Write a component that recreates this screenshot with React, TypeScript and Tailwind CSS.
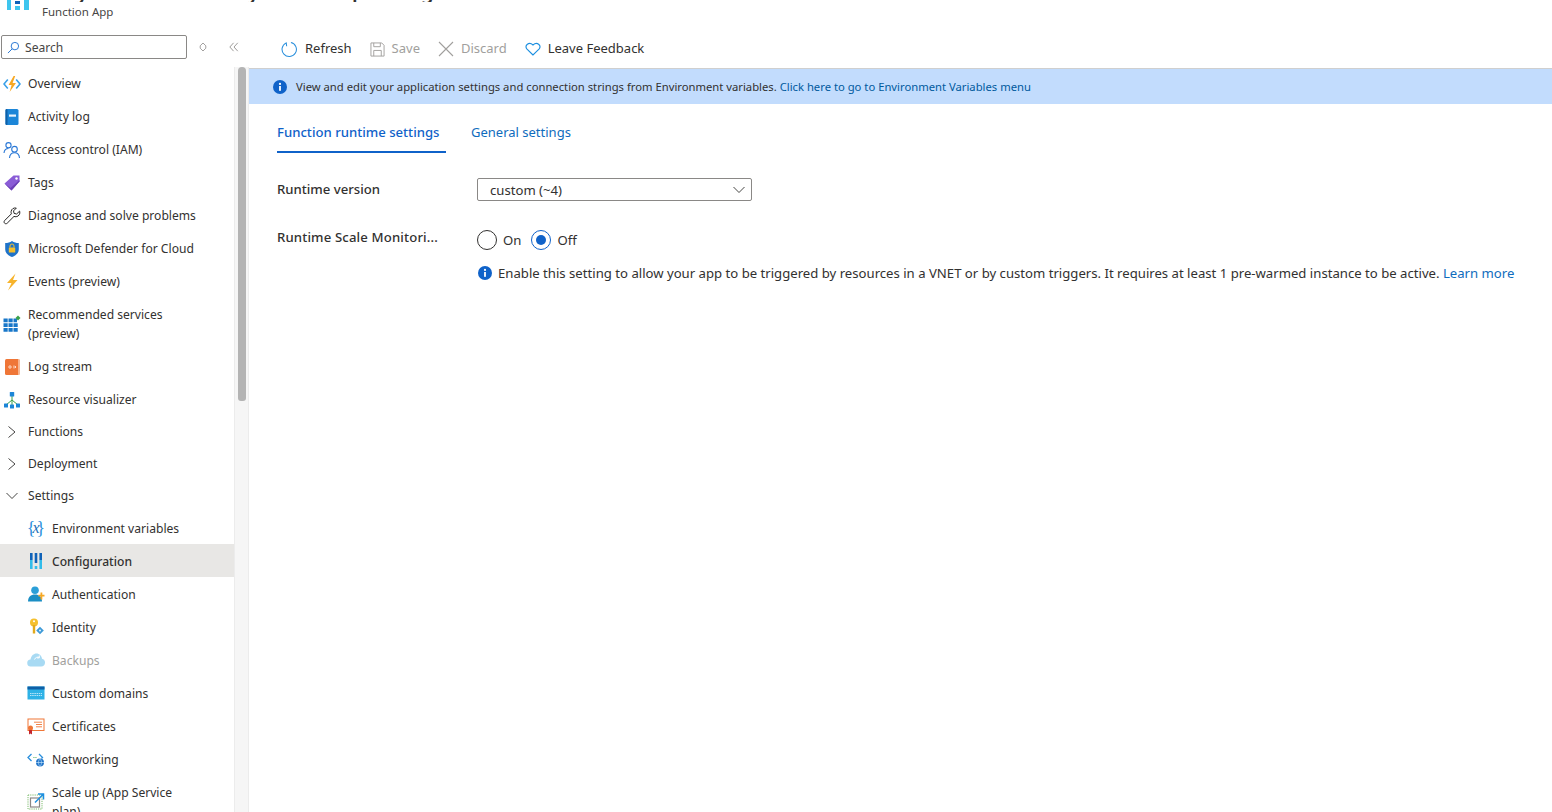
import type { ReactNode } from "react";

function Svg({ children, className }: { children: ReactNode; className?: string }) {
  return (
    <svg viewBox="0 0 18 18" fill="none" className={className ?? "h-[18px] w-[18px] shrink-0"}>
      {children}
    </svg>
  );
}

const FunctionIcon = () => (
  <Svg>
    <path d="M4.800 4.500 1 9l3.800 4.500" stroke="#3aa0e8" strokeWidth="1.600" />
    <path d="M13.200 4.500 17 9l-3.800 4.500" stroke="#3aa0e8" strokeWidth="1.600" />
    <path d="M10.600 1 5.600 10h3L6.600 17l6.400-9H9.600l2.600-7z" fill="#f7a823" />
  </Svg>
);
const BookIcon = () => (
  <Svg>
    <rect x="2.500" y="1" width="13" height="16" rx="1.500" fill="#1c86d8" />
    <rect x="2.500" y="1" width="2" height="16" rx="1" fill="#0f5fa6" />
    <rect x="6" y="6.500" width="7" height="2.200" fill="#e8f3fc" />
  </Svg>
);
const PeopleIcon = () => (
  <Svg>
    <circle cx="5.500" cy="4.200" r="2.600" stroke="#2a78d6" strokeWidth="1.100" />
    <path d="M1 12c.3-3 2-4.500 4.500-4.500" stroke="#2a78d6" strokeWidth="1.100" />
    <circle cx="11.500" cy="8.200" r="2.800" stroke="#2a78d6" strokeWidth="1.100" />
    <path d="M6.500 17c.2-3.400 2-5.200 5-5.200s4.800 1.800 5 5.200" stroke="#2a78d6" strokeWidth="1.100" />
  </Svg>
);
const TagIcon = () => (
  <Svg>
    <path d="M1.500 9.500 10.500 1.500H16.500V7.500L8.500 16.500z" fill="#8a5cd6" />
    <path d="M1.500 9.500 8.500 16.500 16.500 7.500V6L7.500 14z" fill="#6b3fb5" />
    <circle cx="13.500" cy="4.500" r="1.200" fill="#fff" />
  </Svg>
);
const WrenchIcon = () => (
  <Svg>
    <path
      d="M16.500 4.200 13.600 7l-2.500-.6-.6-2.500 2.800-2.800c-2.400-.7-5 .9-5.200 3.500-.1.800 0 1.500.3 2.200l-6.800 6.800c-.7.800-.7 1.900 0 2.600s1.900.7 2.600 0l6.800-6.800c.7.3 1.400.4 2.200.3 2.600-.3 4.200-2.800 3.500-5.500z"
      stroke="#252423"
      strokeWidth="1"
    />
  </Svg>
);
const ShieldIcon = () => (
  <Svg>
    <path d="M9 1c2 1.500 4.200 2 6.800 2v6.500c0 3.500-3 6-6.800 7.500-3.800-1.500-6.800-4-6.800-7.500V3C4.800 3 7 2.500 9 1z" fill="#1f73c9" />
    <rect x="5.800" y="7.500" width="6.400" height="5" rx=".6" fill="#f5c02e" />
    <path d="M7 7.500V6a2 2 0 0 1 4 0v1.500" stroke="#f5c02e" strokeWidth="1" />
  </Svg>
);
const BoltIcon = () => (
  <Svg>
    <path d="M12.500 .5 4 10h4.500L5 17.500 14.500 7H10l2.500-6.500z" fill="#f7b32b" />
  </Svg>
);
const GridIcon = () => (
  <Svg>
    <path
      d="M.5 3.500h4.200v3.800H.5zM5.500 3.500h4.200v3.800H5.500zM10.500 3.500h3.500v3.800h-3.500zM.5 8.200h4.200V12H.5zM5.500 8.200h4.200V12H5.500zM10.500 8.200h4.200V12h-4.200zM.5 12.900h4.200v3.800H.5zM5.500 12.900h4.200v3.800H5.500zM10.500 12.900h4.200v3.800h-4.200z"
      fill="#1877c9"
    />
    <path d="M15 .5l2.500 2.500-2.500 2.500L12.500 3z" fill="#3aa14a" />
  </Svg>
);
const LogStreamIcon = () => (
  <Svg>
    <rect x="2" y="1" width="14.500" height="16" rx="1.500" fill="#ef7637" />
    <rect x="15" y="1" width="1.500" height="16" fill="#f8b48e" />
    <circle cx="7" cy="9" r="1.200" stroke="#ffe9dc" strokeWidth=".9" />
    <path d="M11 7.500v3M12.500 8v2" stroke="#ffe9dc" strokeWidth=".9" />
  </Svg>
);
const VisualizerIcon = () => (
  <Svg>
    <path d="M9 4v5M3 14l6-5 6 5M9 9v5" stroke="#3aa14a" strokeWidth="1" />
    <rect x="6.800" y="1" width="4.400" height="4.400" rx=".5" fill="#1c86d8" />
    <rect x="1" y="12.500" width="4" height="4" rx=".5" fill="#1c86d8" />
    <rect x="7" y="13.500" width="4" height="4" rx=".5" fill="#1c86d8" />
    <rect x="13" y="12.500" width="4" height="4" rx=".5" fill="#1c86d8" />
  </Svg>
);
const Chevron = ({ open }: { open?: boolean }) => (
  <svg viewBox="0 0 12 12" fill="none" className="h-3 w-3 shrink-0">
    <path d={open ? "M.5 3 6 8.500 11.500 3" : "M2.500 .5 9 6l-6.500 5.500"} stroke="#323130" strokeWidth=".9" />
  </svg>
);
const EnvIcon = () => (
  <span className="flex w-[18px] shrink-0 items-center justify-center whitespace-nowrap font-['Liberation_Serif',serif] text-[18px] leading-none text-[#2a8fdc]">
    <span>{"{"}</span>
    <span className="-mx-[3px] text-[16px] italic text-[#1c6fb8]">x</span>
    <span>{"}"}</span>
  </span>
);
const ConfigIcon = () => (
  <Svg>
    <path d="M3 1h2.600v7H3zM7.700 1h2.600v10H7.700zM12.400 1H15v7h-2.600z" fill="#0f62b8" />
    <path d="M3 8h2.600v9H3zM12.400 8H15v9h-2.600z" fill="#32bcea" />
    <path d="M7.700 14h2.600v3H7.700z" fill="#32bcea" />
  </Svg>
);
const AuthIcon = () => (
  <Svg>
    <circle cx="8" cy="5.200" r="3.800" fill="#2b9fd8" />
    <path d="M1 16.500c0-4.500 2.800-7 7-7s7 2.500 7 7z" fill="#1b8ec4" />
    <path d="M13.500 7.500h1.800v2.200h2.200v1.800h-2.200v3h-1.800v-3h-2V9.700h2z" fill="#f7a823" />
  </Svg>
);
const KeyIcon = () => (
  <Svg>
    <circle cx="7" cy="4.500" r="4" fill="#f5c02e" />
    <rect x="5.800" y="7" width="2.400" height="8.500" fill="#e2a91c" />
    <circle cx="7" cy="3.200" r="1" fill="#fff" />
    <path d="M13 8.800 16.800 12.500 13 16.300 9.200 12.500z" fill="#3d9ad8" />
    <circle cx="13" cy="12.500" r="1.100" fill="#d8eefb" />
  </Svg>
);
const BackupIcon = () => (
  <Svg className="h-[18px] w-[18px] shrink-0 opacity-60">
    <path d="M4 15.500a3.500 3.500 0 0 1-.5-7C4.300 4 8 1.500 11.500 3c2.200.9 3.300 2.600 3.500 4.800a3.900 3.900 0 0 1-.8 7.700z" fill="#6fc3ec" />
    <path d="M7.500 8.500c.8-2 2.800-2.800 4.800-2.200M12.300 4.500v2.400H10" stroke="#fff" strokeWidth="1" />
  </Svg>
);
const DomainIcon = () => (
  <Svg>
    <rect x=".5" y="2.500" width="17" height="13" fill="#2eb2e6" />
    <rect x=".5" y="2.500" width="17" height="3" fill="#0f5fa6" />
    <path d="M3 9.500h12M3 11.500h12" stroke="#d8f3fc" strokeWidth=".8" strokeDasharray="1.500 .7" />
  </Svg>
);
const CertIcon = () => (
  <Svg>
    <rect x="1" y="2" width="16" height="11.500" stroke="#ef7637" strokeWidth="1" fill="#fff" />
    <path d="M7 5.200h8M9 7.500h6M9 9.800h6" stroke="#ef7637" strokeWidth=".9" />
    <circle cx="3.500" cy="11" r="2.500" fill="#ef7637" />
    <path d="M2 13h3v4.500l-1.500-1-1.500 1z" fill="#c4262e" />
  </Svg>
);
const NetworkIcon = () => (
  <Svg>
    <path d="M4.500 4 1 7.500 4.500 11M12 4l3.500 3.500-1 1" stroke="#2a8fdc" strokeWidth="1.300" />
    <path d="M6.500 7.500h.9M8.500 7.500h.9" stroke="#3aa14a" strokeWidth="1.200" />
    <circle cx="13" cy="12.500" r="4" fill="#1f73c9" />
    <path d="M9 12.500h8M13 8.500c-2 2.500-2 5.500 0 8M13 8.500c2 2.500 2 5.500 0 8" stroke="#bfe0f8" strokeWidth=".7" />
  </Svg>
);
const ScaleIcon = () => (
  <Svg>
    <rect x="1" y="3" width="14" height="14" stroke="#7dbb6c" strokeWidth="1" strokeDasharray="1.200 1" />
    <rect x="3.500" y="6" width="9" height="9" stroke="#8a8886" strokeWidth="1.200" />
    <path d="M8 10.500 16 2.500M11 2h5.500v5.500" stroke="#1c8fe0" strokeWidth="1.500" />
  </Svg>
);
const InfoDot = () => (
  <svg viewBox="0 0 14 14" className="h-[14px] w-[14px] shrink-0">
    <circle cx="7" cy="7" r="7" fill="#0f62c9" />
    <rect x="6.100" y="6" width="1.800" height="4.800" fill="#fff" />
    <circle cx="7" cy="3.900" r="1.100" fill="#fff" />
  </svg>
);

type NavItem = { label: ReactNode; icon: ReactNode; height?: string; muted?: boolean; active?: boolean };

const topItems: NavItem[] = [
  { label: "Overview", icon: <FunctionIcon /> },
  { label: "Activity log", icon: <BookIcon /> },
  { label: "Access control (IAM)", icon: <PeopleIcon /> },
  { label: "Tags", icon: <TagIcon /> },
  { label: "Diagnose and solve problems", icon: <WrenchIcon /> },
  { label: "Microsoft Defender for Cloud", icon: <ShieldIcon /> },
  { label: "Events (preview)", icon: <BoltIcon /> },
  { label: <>Recommended services<br />(preview)</>, icon: <GridIcon />, height: "h-[52px]" },
  { label: "Log stream", icon: <LogStreamIcon /> },
  { label: "Resource visualizer", icon: <VisualizerIcon /> },
];

const settingsItems: NavItem[] = [
  { label: "Environment variables", icon: <EnvIcon /> },
  { label: "Configuration", icon: <ConfigIcon />, active: true },
  { label: "Authentication", icon: <AuthIcon /> },
  { label: "Identity", icon: <KeyIcon /> },
  { label: "Backups", icon: <BackupIcon />, muted: true },
  { label: "Custom domains", icon: <DomainIcon /> },
  { label: "Certificates", icon: <CertIcon /> },
  { label: "Networking", icon: <NetworkIcon /> },
  { label: <>Scale up (App Service<br />plan)</>, icon: <ScaleIcon />, height: "h-[52px]" },
];

function TopRow({ item }: { item: NavItem }) {
  return (
    <div className={"flex items-center gap-[7px] pl-[3px] leading-[19px] " + (item.height ?? "h-[33px]")}>
      {item.icon}
      <span>{item.label}</span>
    </div>
  );
}

function SubRow({ item }: { item: NavItem }) {
  return (
    <div
      className={
        "flex shrink-0 items-center gap-[7px] pl-[27px] leading-[19px] " +
        (item.height ?? "h-[33px]") +
        (item.active ? " bg-[#e8e7e5] font-medium" : "") +
        (item.muted ? " text-[#a19f9d]" : "")
      }
    >
      {item.icon}
      <span className="pt-[2px]">{item.label}</span>
    </div>
  );
}

function GroupRow({ label, open, height }: { label: string; open?: boolean; height: string }) {
  return (
    <div className={"flex items-center gap-[10px] pl-[6px] " + height}>
      <Chevron open={open} />
      <span className={open ? "pt-[2px]" : ""}>{label}</span>
    </div>
  );
}

function Sidebar() {
  return (
    <div className="flex w-[249px] shrink-0 flex-col text-[12.1px]">
      <div className="flex h-[32px] items-start pl-px">
        <div className="flex h-[24px] w-[186px] items-center gap-[5px] rounded-[2px] border border-[#8a8886] pl-[5px]">
          <svg viewBox="0 0 14 14" fill="none" className="h-[13px] w-[13px]">
            <circle cx="8.500" cy="5.500" r="4" stroke="#1c6fd0" strokeWidth="1" />
            <path d="M5.500 8.500 1 13" stroke="#1c6fd0" strokeWidth="1" />
          </svg>
          <span className="pt-[2px] text-[#484644]">Search</span>
        </div>
        <svg viewBox="0 0 10 12" fill="none" className="ml-[12px] mt-[7px] h-[10px] w-[8px]">
          <path d="M5 1 1.500 4.500v3L5 11l3.500-3.500v-3z" stroke="#8a8886" strokeWidth="1" />
        </svg>
        <svg viewBox="0 0 12 12" fill="none" className="ml-[22px] mt-[7px] h-[10px] w-[10px]">
          <path d="M5.500 1 1 6l4.500 5M10.500 1 6 6l4.500 5" stroke="#8a8886" strokeWidth="1" />
        </svg>
      </div>
      <div className="flex min-h-0 flex-1">
        <nav className="w-[234px] shrink-0 overflow-hidden">
          {topItems.map((item, i) => (
            <TopRow key={i} item={item} />
          ))}
          <GroupRow label="Functions" height="h-[32px]" />
          <GroupRow label="Deployment" height="h-[32px]" />
          <GroupRow label="Settings" height="h-[31px]" open />
          {settingsItems.map((item, i) => (
            <SubRow key={i} item={item} />
          ))}
        </nav>
        <div className="w-[15px] shrink-0 border-x border-[#ececec] bg-[#f6f6f6] pl-[3px]">
          <div className="h-[334px] w-2 rounded-t-[4px] rounded-b-[3px] bg-[#b4b4b4]" />
        </div>
      </div>
    </div>
  );
}

function ToolButton({ icon, label, muted }: { icon: ReactNode; label: string; muted?: boolean }) {
  return (
    <div className={"flex items-center gap-[7px] " + (muted ? "text-[#a19f9d]" : "")}>
      {icon}
      <span>{label}</span>
    </div>
  );
}

function Toolbar() {
  return (
    <div className="flex h-[34px] items-center gap-[18px] border-b border-[#cfcfcf] pb-[5px] pl-[32px] text-[13px]">
      <ToolButton
        label="Refresh"
        icon={
          <svg viewBox="0 0 18 18" fill="none" className="h-[17px] w-[17px]">
            <path d="M5.500 2A7.600 7.600 0 1 0 10.500 1.500M5.500 1.500 6 5.500" stroke="#2a8fdc" strokeWidth="1.100" />
          </svg>
        }
      />
      <ToolButton
        muted
        label="Save"
        icon={
          <svg viewBox="0 0 16 16" fill="none" className="h-[15px] w-[15px]">
            <path d="M1 1h11.500L15 3.500V15H1z" stroke="#a19f9d" strokeWidth="1" />
            <path d="M4 1v4h7V1M4 15V9h8v6" stroke="#a19f9d" strokeWidth="1" />
          </svg>
        }
      />
      <ToolButton
        muted
        label="Discard"
        icon={
          <svg viewBox="0 0 16 16" fill="none" className="h-4 w-4">
            <path d="M1 1l14 14M15 1 1 15" stroke="#a19f9d" strokeWidth="1.100" />
          </svg>
        }
      />
      <ToolButton
        label="Leave Feedback"
        icon={
          <svg viewBox="0 0 16 14" fill="none" className="h-[14px] w-4">
            <path d="M8 13 1.800 6.800C-.6 3.600 3.800-.8 8 3c4.200-3.800 8.600.6 6.200 3.800z" stroke="#1c8fe0" strokeWidth="1.100" />
          </svg>
        }
      />
    </div>
  );
}

function Radio({ label, checked }: { label: string; checked?: boolean }) {
  return (
    <div className="flex items-center gap-[6px]">
      <span
        className={
          "flex h-5 w-5 items-center justify-center rounded-full border " +
          (checked ? "border-[#0f62c9]" : "border-[#323130]")
        }
      >
        {checked && <span className="h-[10px] w-[10px] rounded-full bg-[#0f62c9]" />}
      </span>
      <span className="pt-[2px]">{label}</span>
    </div>
  );
}

function Main() {
  return (
    <div className="min-w-0 flex-1 text-[13.15px]">
      <Toolbar />
      <div className="flex h-[35px] items-center gap-[9px] bg-[#c2dcfd] pl-[24px] pr-2 text-[11.25px]">
        <InfoDot />
        <span className="pt-[2px]">
          View and edit your application settings and connection strings from Environment variables.{" "}
          <span className="text-[#005a9e]">Click here to go to Environment Variables menu</span>
        </span>
      </div>
      <div className="flex h-[49px] items-start pl-[28px]">
        <div className="flex h-[49px] w-[169px] items-start border-b-2 border-[#0f62c9] pt-[19px] font-medium leading-[19px] text-[#0f62c9]">
          Function runtime settings
        </div>
        <div className="pl-[25px] pt-[19px] text-[13px] leading-[19px] text-[#0f6cbd]">General settings</div>
      </div>
      <div className="flex pl-[28px] pt-[25px]">
        <div className="w-[200px] pt-[2px] font-medium leading-[19px]">Runtime version</div>
        <div className="flex h-[23px] w-[275px] items-center justify-between rounded-[2px] border border-[#8a8886] pl-3 pr-[6px]">
          <span className="pt-[3px]">custom (~4)</span>
          <Chevron open />
        </div>
      </div>
      <div className="flex pl-[28px] pt-[28px]">
        <div className="-mt-px w-[200px] font-medium leading-[19px] tracking-[0.15px]">Runtime Scale Monitori...</div>
        <div className="flex flex-col">
          <div className="flex gap-[10px]">
            <Radio label="On" />
            <Radio label="Off" checked />
          </div>
          <div className="mt-[13px] flex items-center gap-[6px] whitespace-nowrap pl-px leading-[19px]">
            <InfoDot />
            <span>
              Enable this setting to allow your app to be triggered by resources in a VNET or by custom triggers. It
              requires at least 1 pre-warmed instance to be active.{" "}
              <span className="text-[#0f6cbd]">Learn more</span>
            </span>
          </div>
        </div>
      </div>
    </div>
  );
}

function Header() {
  return (
    <header className="flex h-[35px] shrink-0 items-start pl-[7px]">
      <svg viewBox="0 0 22 10" className="h-[10px] w-[22px] shrink-0">
        <path d="M0 0h4v10H0zM17 0h5v10h-5z" fill="#3ec5ee" />
        <path d="M8 1h5v3H8z" fill="#0f62b8" />
        <path d="M8 6h5v4H8z" fill="#3ec5ee" />
      </svg>
      <div className="ml-[13px] flex flex-col">
        {/* the page title is scrolled off: only its descenders show */}
        <div className="flex h-[2px] items-end overflow-hidden text-[20px] font-semibold leading-[20px]">
          <span className="ml-[35px] w-[11px]">y</span>
          <span className="ml-[160px] w-[11px]">y</span>
          <span className="ml-[93px] w-[12px]">p</span>
          <span className="ml-[57px] w-[12px]">g</span>
        </div>
        <span className="mt-px text-[11.5px] leading-[18px] text-[#484644]">Function App</span>
      </div>
    </header>
  );
}

export default function App() {
  return (
    <div className="flex h-[812px] w-[1552px] flex-col overflow-hidden bg-white font-['Noto_Sans',sans-serif] text-[#323130]">
      <Header />
      <div className="flex min-h-0 flex-1">
        <Sidebar />
        <Main />
      </div>
    </div>
  );
}
